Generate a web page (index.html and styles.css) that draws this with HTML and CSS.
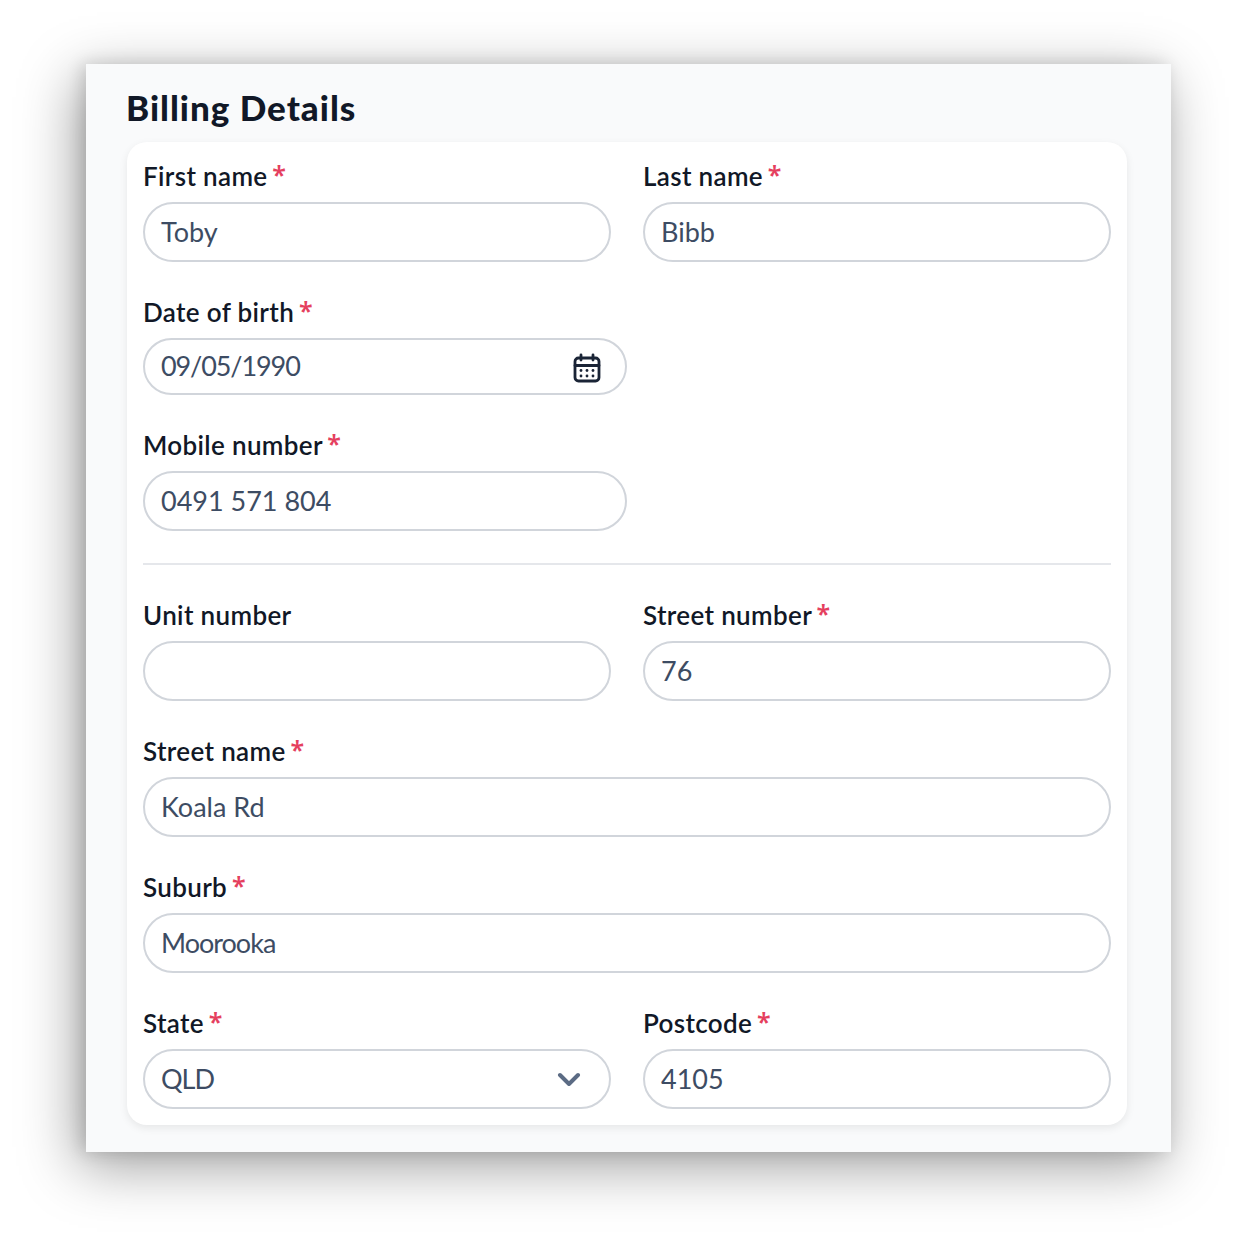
FILE: index.html
```html
<!DOCTYPE html>
<html lang="en">
<head>
    <meta charset="UTF-8">
    <meta name="viewport" content="width=device-width, initial-scale=1.0">
    <title>Billing Details</title>
    <link rel="stylesheet" href="styles.css">
</head>
<body>
    <section class="panel">
        <h1>Billing Details</h1>
        <form class="card">
            <div class="row">
                <div class="field">
                    <label>First name <span class="req">*</span></label>
                    <div class="input">Toby</div>
                </div>
                <div class="field">
                    <label>Last name <span class="req">*</span></label>
                    <div class="input">Bibb</div>
                </div>
            </div>
            <div class="field narrow">
                <label>Date of birth <span class="req">*</span></label>
                <div class="input short">
                    <span class="date">09/05/1990</span>
                    <svg class="calendar" width="28" height="30" viewBox="0 0 28 30" fill="none" stroke="#1a2436" stroke-width="2.8" stroke-linecap="round">
                        <rect x="2" y="5" width="24" height="23" rx="3.5"/>
                        <path d="M2 12.5h24M8 2v5M20 2v5"/>
                        <g fill="#1a2436" stroke="none">
                            <circle cx="8" cy="17.5" r="1.4"/><circle cx="14" cy="17.5" r="1.4"/><circle cx="20" cy="17.5" r="1.4"/>
                            <circle cx="8" cy="23" r="1.4"/><circle cx="14" cy="23" r="1.4"/><circle cx="20" cy="23" r="1.4"/>
                        </g>
                    </svg>
                </div>
            </div>
            <div class="field narrow">
                <label>Mobile number <span class="req">*</span></label>
                <div class="input">0491 571 804</div>
            </div>
            <hr>
            <div class="row">
                <div class="field">
                    <label>Unit number</label>
                    <div class="input"></div>
                </div>
                <div class="field">
                    <label>Street number <span class="req">*</span></label>
                    <div class="input">76</div>
                </div>
            </div>
            <div class="field">
                <label>Street name <span class="req">*</span></label>
                <div class="input">Koala Rd</div>
            </div>
            <div class="field">
                <label>Suburb <span class="req">*</span></label>
                <div class="input"><span class="tight">Moorooka</span></div>
            </div>
            <div class="row">
                <div class="field">
                    <label>State <span class="req">*</span></label>
                    <div class="input select">
                        <span class="tight">QLD</span>
                        <svg class="chevron" width="24" height="14" viewBox="0 0 24 14" fill="none" stroke="#5b6b84" stroke-width="4" stroke-linecap="round" stroke-linejoin="round">
                            <path d="M3 3l9 9 9-9"/>
                        </svg>
                    </div>
                </div>
                <div class="field">
                    <label>Postcode <span class="req">*</span></label>
                    <div class="input">4105</div>
                </div>
            </div>
        </form>
    </section>
</body>
</html>
```

FILE: styles.css
```css
body {
    margin: 0;
    padding: 64px 64px 87px 86px;
    background-color: #fff;
    font-family: Lato, "Noto Sans", sans-serif;
    color: #111827;
}
.panel {
    box-sizing: border-box;
    width: 1085px;
    height: 1088px;
    padding: 22px 44px 0 41px;
    background-color: #f9fafb;
    box-shadow: -8px 14px 54px rgba(0, 0, 0, 0.38), -4px 0 16px rgba(0, 0, 0, 0.14);
}
.panel h1 {
    margin: 0 0 14px -1px;
    font-size: 35px;
    line-height: 42px;
    font-weight: 900;
    letter-spacing: 1px;
}
.card {
    display: flex;
    flex-direction: column;
    gap: 32px;
    padding: 16px;
    background-color: #fff;
    border-radius: 20px;
    box-shadow: 0 3px 8px rgba(0, 0, 0, 0.08);
}
.row {
    display: grid;
    grid-template-columns: 468px 468px;
    gap: 32px;
}
.field label {
    display: block;
    margin-bottom: 8px;
    font-size: 26px;
    line-height: 36px;
    font-weight: 600;
    letter-spacing: 0.35px;
    white-space: nowrap;
}
.req {
    margin-left: -2px;
    font-family: "Noto Sans", sans-serif;
    font-size: 25px;
    line-height: 1;
    vertical-align: 2px;
    color: #e5405e;
}
.input {
    box-sizing: border-box;
    height: 60px;
    padding: 0 17px 2px 16px;
    display: flex;
    align-items: center;
    justify-content: space-between;
    border: 2px solid #d1d5db;
    border-radius: 30px;
    font-size: 27px;
    color: #3d4c63;
    white-space: nowrap;
}
.narrow {
    width: 484px;
}
.short {
    height: 57px;
}
.date {
    letter-spacing: -1.1px;
}
.tight {
    letter-spacing: -1px;
}
.calendar {
    margin: 5px 7px 0 0;
}
.chevron {
    margin: 2px 11px 0 0;
}
hr {
    width: 100%;
    margin: 0;
    border: none;
    border-top: 2px solid #e5e7eb;
}
```
